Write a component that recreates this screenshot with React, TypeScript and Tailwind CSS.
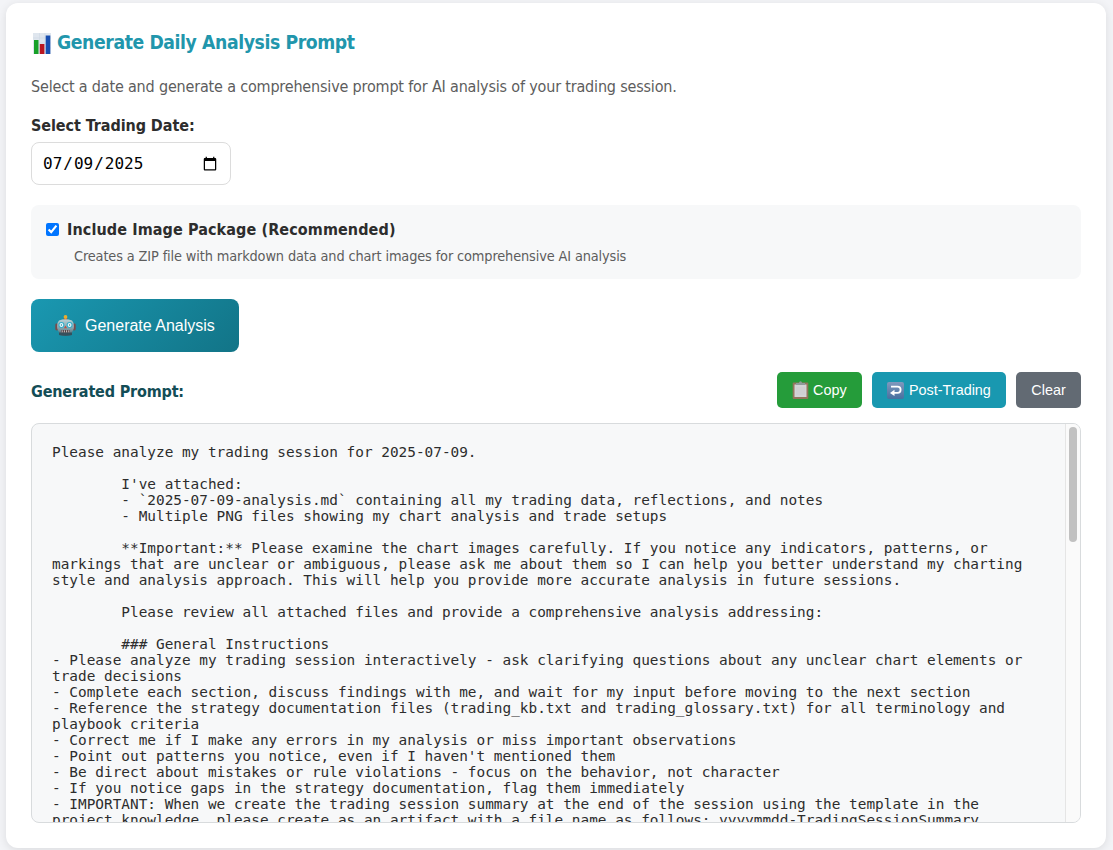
import React from 'react';

const promptText = `Please analyze my trading session for 2025-07-09.

        I've attached:
        - \`2025-07-09-analysis.md\` containing all my trading data, reflections, and notes
        - Multiple PNG files showing my chart analysis and trade setups

        **Important:** Please examine the chart images carefully. If you notice any indicators, patterns, or
markings that are unclear or ambiguous, please ask me about them so I can help you better understand my charting
style and analysis approach. This will help you provide more accurate analysis in future sessions.

        Please review all attached files and provide a comprehensive analysis addressing:

        ### General Instructions
- Please analyze my trading session interactively - ask clarifying questions about any unclear chart elements or
trade decisions
- Complete each section, discuss findings with me, and wait for my input before moving to the next section
- Reference the strategy documentation files (trading_kb.txt and trading_glossary.txt) for all terminology and
playbook criteria
- Correct me if I make any errors in my analysis or miss important observations
- Point out patterns you notice, even if I haven't mentioned them
- Be direct about mistakes or rule violations - focus on the behavior, not character
- If you notice gaps in the strategy documentation, flag them immediately
- IMPORTANT: When we create the trading session summary at the end of the session using the template in the
project knowledge, please create as an artifact with a file name as follows: yyyymmdd-TradingSessionSummary`;

function ChartIcon() {
  return (
    <svg width="18" height="21" viewBox="0 0 18 21" className="shrink-0">
      <rect width="18" height="21" fill="#dfe6ee" />
      <path d="M0 5h18M0 10h18M0 15h18M6.500 0v21M12 0v21" stroke="#cfd8e4" strokeWidth=".6" />
      <rect x="1" y="7" width="4.500" height="14" fill="#17a128" />
      <rect x="6.800" y="11" width="4.600" height="10" fill="#b91620" />
      <rect x="12.700" y="2.500" width="4.600" height="18.500" fill="#174eb0" />
    </svg>
  );
}

function RobotIcon() {
  return (
    <svg width="21" height="21" viewBox="0 0 21 21" className="shrink-0">
      <defs>
        <linearGradient id="face" x1="0" y1="0" x2="0" y2="1">
          <stop offset="0" stopColor="#b9d3d8" />
          <stop offset=".6" stopColor="#7d9ca5" />
          <stop offset="1" stopColor="#465c68" />
        </linearGradient>
      </defs>
      <rect x="0.300" y="8.500" width="3" height="7" rx="1.400" fill="#7a4a4b" />
      <rect x="17.700" y="8.500" width="3" height="7" rx="1.400" fill="#7a4a4b" />
      <path d="M8.300 5.500 9 3h3l.7 2.500z" fill="#a5453a" />
      <circle cx="10.500" cy="2" r="1.900" fill="#e9ad2f" />
      <path d="M4 5.500Q10.500 2.800 17 5.500 19.500 8 18.800 13.500L17 17.500V20q-6.500 1.600-13 0v-2.500L2.200 13.500Q1.500 8 4 5.500z" fill="url(#face)" />
      <path d="M4 17.500h13V20q-6.500 1.600-13 0z" fill="#35505c" />
      <circle cx="6.400" cy="10" r="3" fill="#35aeca" />
      <circle cx="14.600" cy="10" r="3" fill="#35aeca" />
      <circle cx="6.400" cy="10" r="1.900" fill="#e8fcff" />
      <circle cx="14.600" cy="10" r="1.900" fill="#e8fcff" />
      <circle cx="6.400" cy="10" r=".7" fill="#347e91" />
      <circle cx="14.600" cy="10" r=".7" fill="#347e91" />
      <path d="m10.500 10.500 1.500 2.700H9z" fill="#bd4c42" />
      <rect x="6" y="15" width="9" height="2.600" rx=".8" fill="#543f43" />
      <path d="M7.200 15.300v2M9.400 15.300v2M11.600 15.300v2M13.800 15.300v2" stroke="#d5d9d6" strokeWidth=".9" />
    </svg>
  );
}

function ClipboardIcon() {
  return (
    <svg width="17" height="18" viewBox="0 0 17 18" className="shrink-0">
      <rect x=".7" y="1.500" width="15.600" height="16.500" rx="1" fill="#94745c" />
      <rect x="2.500" y="3.500" width="12" height="12.500" fill="#d3d4d6" />
      <path d="M4 7h9M4 9h9M4 11h9M4 13h9" stroke="#c6c8ca" strokeWidth=".6" />
      <path d="M4 4V2h3Q7 .2 8.500.2T10 2h3v2z" fill="#8f9b9b" />
    </svg>
  );
}

function ReturnIcon() {
  return (
    <svg width="17" height="17" viewBox="0 0 17 17" className="shrink-0">
      <defs>
        <linearGradient id="tile" x1="0" y1="0" x2="0" y2="1">
          <stop offset="0" stopColor="#8198bd" />
          <stop offset="1" stopColor="#47709f" />
        </linearGradient>
      </defs>
      <rect width="17" height="17" rx="2" fill="url(#tile)" />
      <path d="M4 4.700h6.500a3.100 3.100 0 0 1 0 6.200H7" fill="none" stroke="#fff" strokeWidth="1.800" />
      <path d="M3 10.900 7.500 7.800V14z" fill="#fff" />
    </svg>
  );
}

export default function App() {
  return (
    <div className="h-[850px] overflow-hidden bg-[#f3f4f7] pt-[3px] pr-[7px] pl-[6px] font-['DejaVu_Sans_Condensed','DejaVu_Sans',sans-serif] [font-stretch:condensed]">
      <main className="flex h-[845px] flex-col rounded-xl bg-white px-[25px] pt-[25px] shadow-[0_2px_10px_rgba(0,0,0,0.1)]">
        <h2 className="flex h-[30px] items-center gap-[6px] pl-[2px] text-[19.2px] font-bold whitespace-nowrap text-[#2196ac]">
          <ChartIcon />
          <span className="tracking-[-0.400px]">Generate Daily Analysis Prompt</span>
        </h2>
        <p className="mt-[17px] h-6 text-[16px] leading-6 tracking-[-0.175px] whitespace-nowrap text-[#5d5d5d]">
          Select a date and generate a comprehensive prompt for AI analysis of your trading session.
        </p>
        <label htmlFor="trading-date" className="mt-[15px] h-6 text-[16px] leading-6 font-bold tracking-[-0.070px] text-[#2d2d2d]">
          Select Trading Date:
        </label>
        <input
          id="trading-date"
          type="date"
          defaultValue="2025-07-09"
          className="mt-[4px] h-[43px] w-[200px] shrink-0 rounded-lg border border-[#dcdcdc] bg-white px-[10px] font-['DejaVu_Sans_Mono',monospace] text-[16px] text-black"
        />
        <section className="mt-[20px] h-[74px] shrink-0 rounded-lg bg-[#f7f8f9] px-[15px] pt-[13px]">
          <label className="flex h-6 items-center gap-2 text-[16px] font-bold text-[#2d2d2d]">
            <input type="checkbox" defaultChecked className="mb-px size-[13px]" />
            <span className="tracking-[0.100px]">Include Image Package (Recommended)</span>
          </label>
          <p className="mt-[3px] pl-[28px] text-[14.4px] leading-[22px] tracking-[-0.133px] text-[#5d5d5d]">
            Creates a ZIP file with markdown data and chart images for comprehensive AI analysis
          </p>
        </section>
        <button className="mt-[20px] flex h-[53px] w-[208px] shrink-0 items-center gap-[9px] rounded-lg bg-linear-135 from-[#1a98b1] to-[#127487] pl-[24px] font-['Liberation_Sans',sans-serif] text-[16px] whitespace-nowrap text-white">
          <RobotIcon />
          <span>Generate Analysis</span>
        </button>
        <div className="mt-[20px] flex h-9 shrink-0 items-center justify-between">
          <h3 className="pt-[3px] text-[16px] font-bold tracking-[-0.170px] text-[#134d56]">Generated Prompt:</h3>
          <div className="flex gap-[10px] font-['Liberation_Sans',sans-serif] text-[14.4px] text-white">
            <button className="flex h-9 w-[85px] items-center gap-[4px] rounded-[5px] bg-[#259c3a] pl-[15px]">
              <ClipboardIcon />
              <span className="pt-[2px]">Copy</span>
            </button>
            <button className="flex h-9 w-[134px] items-center gap-[5px] rounded-[5px] bg-[#1998b0] pl-[15px] whitespace-nowrap">
              <ReturnIcon />
              <span className="pt-[2px]">Post-Trading</span>
            </button>
            <button className="h-9 w-[65px] rounded-[5px] bg-[#626a73] pt-px">Clear</button>
          </div>
        </div>
        <div className="mt-[15px] flex h-[400px] shrink-0 overflow-hidden rounded-lg border border-[#d8dbdd] bg-[#f7f8f9]">
          <pre className="min-w-0 flex-1 overflow-hidden pt-[20px] pl-[20px] font-['DejaVu_Sans_Mono',monospace] text-[14.4px] leading-4 text-[#2d2d2d]">
            {promptText}
          </pre>
          <div className="w-[15px] shrink-0 border-l border-[#e5e5e5] bg-[#fafafa] pt-[3px] pl-[3px]">
            <div className="h-[115px] w-2 rounded-full bg-[#c1c1c1]" />
          </div>
        </div>
      </main>
    </div>
  );
}
